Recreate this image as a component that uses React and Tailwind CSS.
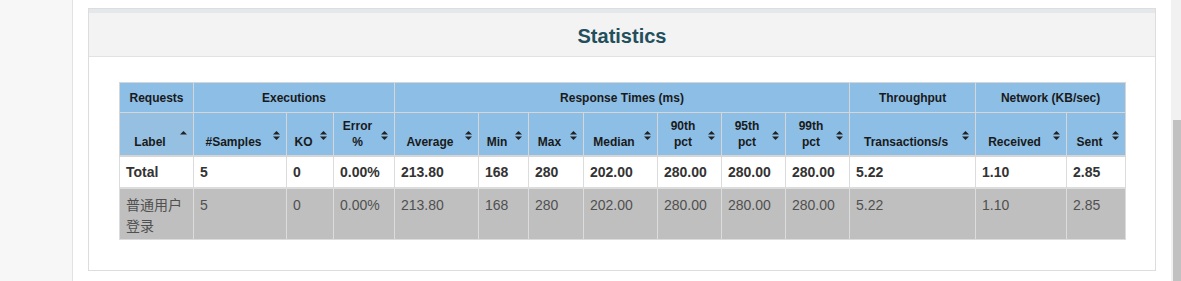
import React from "react";

// Column widths of the statistics table, border included
const columns = [
  { key: "label", title: ["Label"], width: "w-[74px]", sorted: true },
  { key: "samples", title: ["#Samples"], width: "w-[93px]" },
  { key: "ko", title: ["KO"], width: "w-[47px]" },
  { key: "error", title: ["Error", "%"], width: "w-[61px]" },
  { key: "avg", title: ["Average"], width: "w-[84px]" },
  { key: "min", title: ["Min"], width: "w-[50px]" },
  { key: "max", title: ["Max"], width: "w-[55px]" },
  { key: "median", title: ["Median"], width: "w-[74px]" },
  { key: "p90", title: ["90th", "pct"], width: "w-[64px]" },
  { key: "p95", title: ["95th", "pct"], width: "w-[64px]" },
  { key: "p99", title: ["99th", "pct"], width: "w-[64px]" },
  { key: "tps", title: ["Transactions/s"], width: "w-[126px]" },
  { key: "received", title: ["Received"], width: "w-[91px]" },
  { key: "sent", title: ["Sent"], width: "w-[59px]" },
];

const groups = [
  { name: "Requests", span: 1 },
  { name: "Executions", span: 3 },
  { name: "Response Times (ms)", span: 7 },
  { name: "Throughput", span: 1 },
  { name: "Network (KB/sec)", span: 2 },
];

const total = ["Total", "5", "0", "0.00%", "213.80", "168", "280", "202.00", "280.00", "280.00", "280.00", "5.22", "1.10", "2.85"];
const rows = [
  ["普通用户登录", "5", "0", "0.00%", "213.80", "168", "280", "202.00", "280.00", "280.00", "280.00", "5.22", "1.10", "2.85"],
];

function SortIcon({ sorted }) {
  return (
    <svg width="7" height="9" viewBox="0 0 7 9" className="absolute right-[6px] top-[18px]">
      <path d="M3.5 0 L7 3.6 L0 3.6 Z" fill="#222" />
      {!sorted && <path d="M3.5 9 L7 5.4 L0 5.4 Z" fill="#222" />}
    </svg>
  );
}

function App() {
  return (
    <div
      className="flex h-[281px] w-full overflow-hidden bg-white"
      style={{ fontFamily: '"Liberation Sans", "Noto Sans CJK SC", Arial, sans-serif' }}
    >
      <div className="w-[73px] shrink-0 bg-[#f7f7f7] border-r border-[#e2e2e2]" />

      <div className="flex-1 pl-[15px] pt-[8px]">
        <div className="w-[1068px] border border-[#dddddd] bg-white">
          <div className="h-[48px] border-t-[4px] border-t-[#e5e8eb] border-b border-b-[#e2e2e2] bg-[#f3f3f3] flex items-center justify-center pt-[2px]">
            <h2 className="text-[20px] font-bold text-[#234f5d] leading-none">Statistics</h2>
          </div>

          <div className="px-[30px] pt-[25px] pb-[30px]">
            <table className="table-fixed border-collapse w-[1006px]">
              <colgroup>
                {columns.map((c) => (
                  <col key={c.key} className={c.width} />
                ))}
              </colgroup>
              <thead>
                <tr>
                  {groups.map((g) => (
                    <th
                      key={g.name}
                      colSpan={g.span}
                      className="h-[30px] border border-[#d6d6d6] bg-[#8cbee6] text-[12px] font-bold text-[#1a1a1a] text-center align-middle leading-[16px]"
                    >
                      {g.name}
                    </th>
                  ))}
                </tr>
                <tr>
                  {columns.map((c) => (
                    <th
                      key={c.key}
                      className={`relative h-[43px] border border-[#d6d6d6] border-b-2 text-[12px] font-bold text-[#1a1a1a] text-center align-bottom leading-[16px] pl-[4px] pr-[17px] pb-[5px] pt-[4px] ${
                        c.sorted ? "bg-[#95c0e1]" : "bg-[#8cbee6]"
                      }`}
                    >
                      {c.title.map((line) => (
                        <div key={line}>{line}</div>
                      ))}
                      <SortIcon sorted={c.sorted} />
                    </th>
                  ))}
                </tr>
              </thead>
              <tbody>
                <tr className="bg-white">
                  {total.map((v, i) => (
                    <td
                      key={i}
                      className="border border-[#dcdcdc] border-b-2 px-[6px] pt-[5px] pb-[5px] text-[14px] leading-[20px] font-bold text-[#333] align-top"
                    >
                      {v}
                    </td>
                  ))}
                </tr>
                {rows.map((r, ri) => (
                  <tr key={ri} className="bg-[#bfbfbf]">
                    {r.map((v, i) => (
                      <td
                        key={i}
                        className="border border-[#dcdcdc] px-[6px] pt-[6px] pb-[2px] text-[14px] leading-[21px] text-[#505050] align-top"
                      >
                        {v}
                      </td>
                    ))}
                  </tr>
                ))}
              </tbody>
            </table>
          </div>
        </div>
      </div>

      <div className="w-[10px] shrink-0 bg-[#f1f1f1] pl-[2px] pt-[120px]">
        <div className="h-full bg-[#c1c1c1]" />
      </div>
    </div>
  );
}

export default App;
